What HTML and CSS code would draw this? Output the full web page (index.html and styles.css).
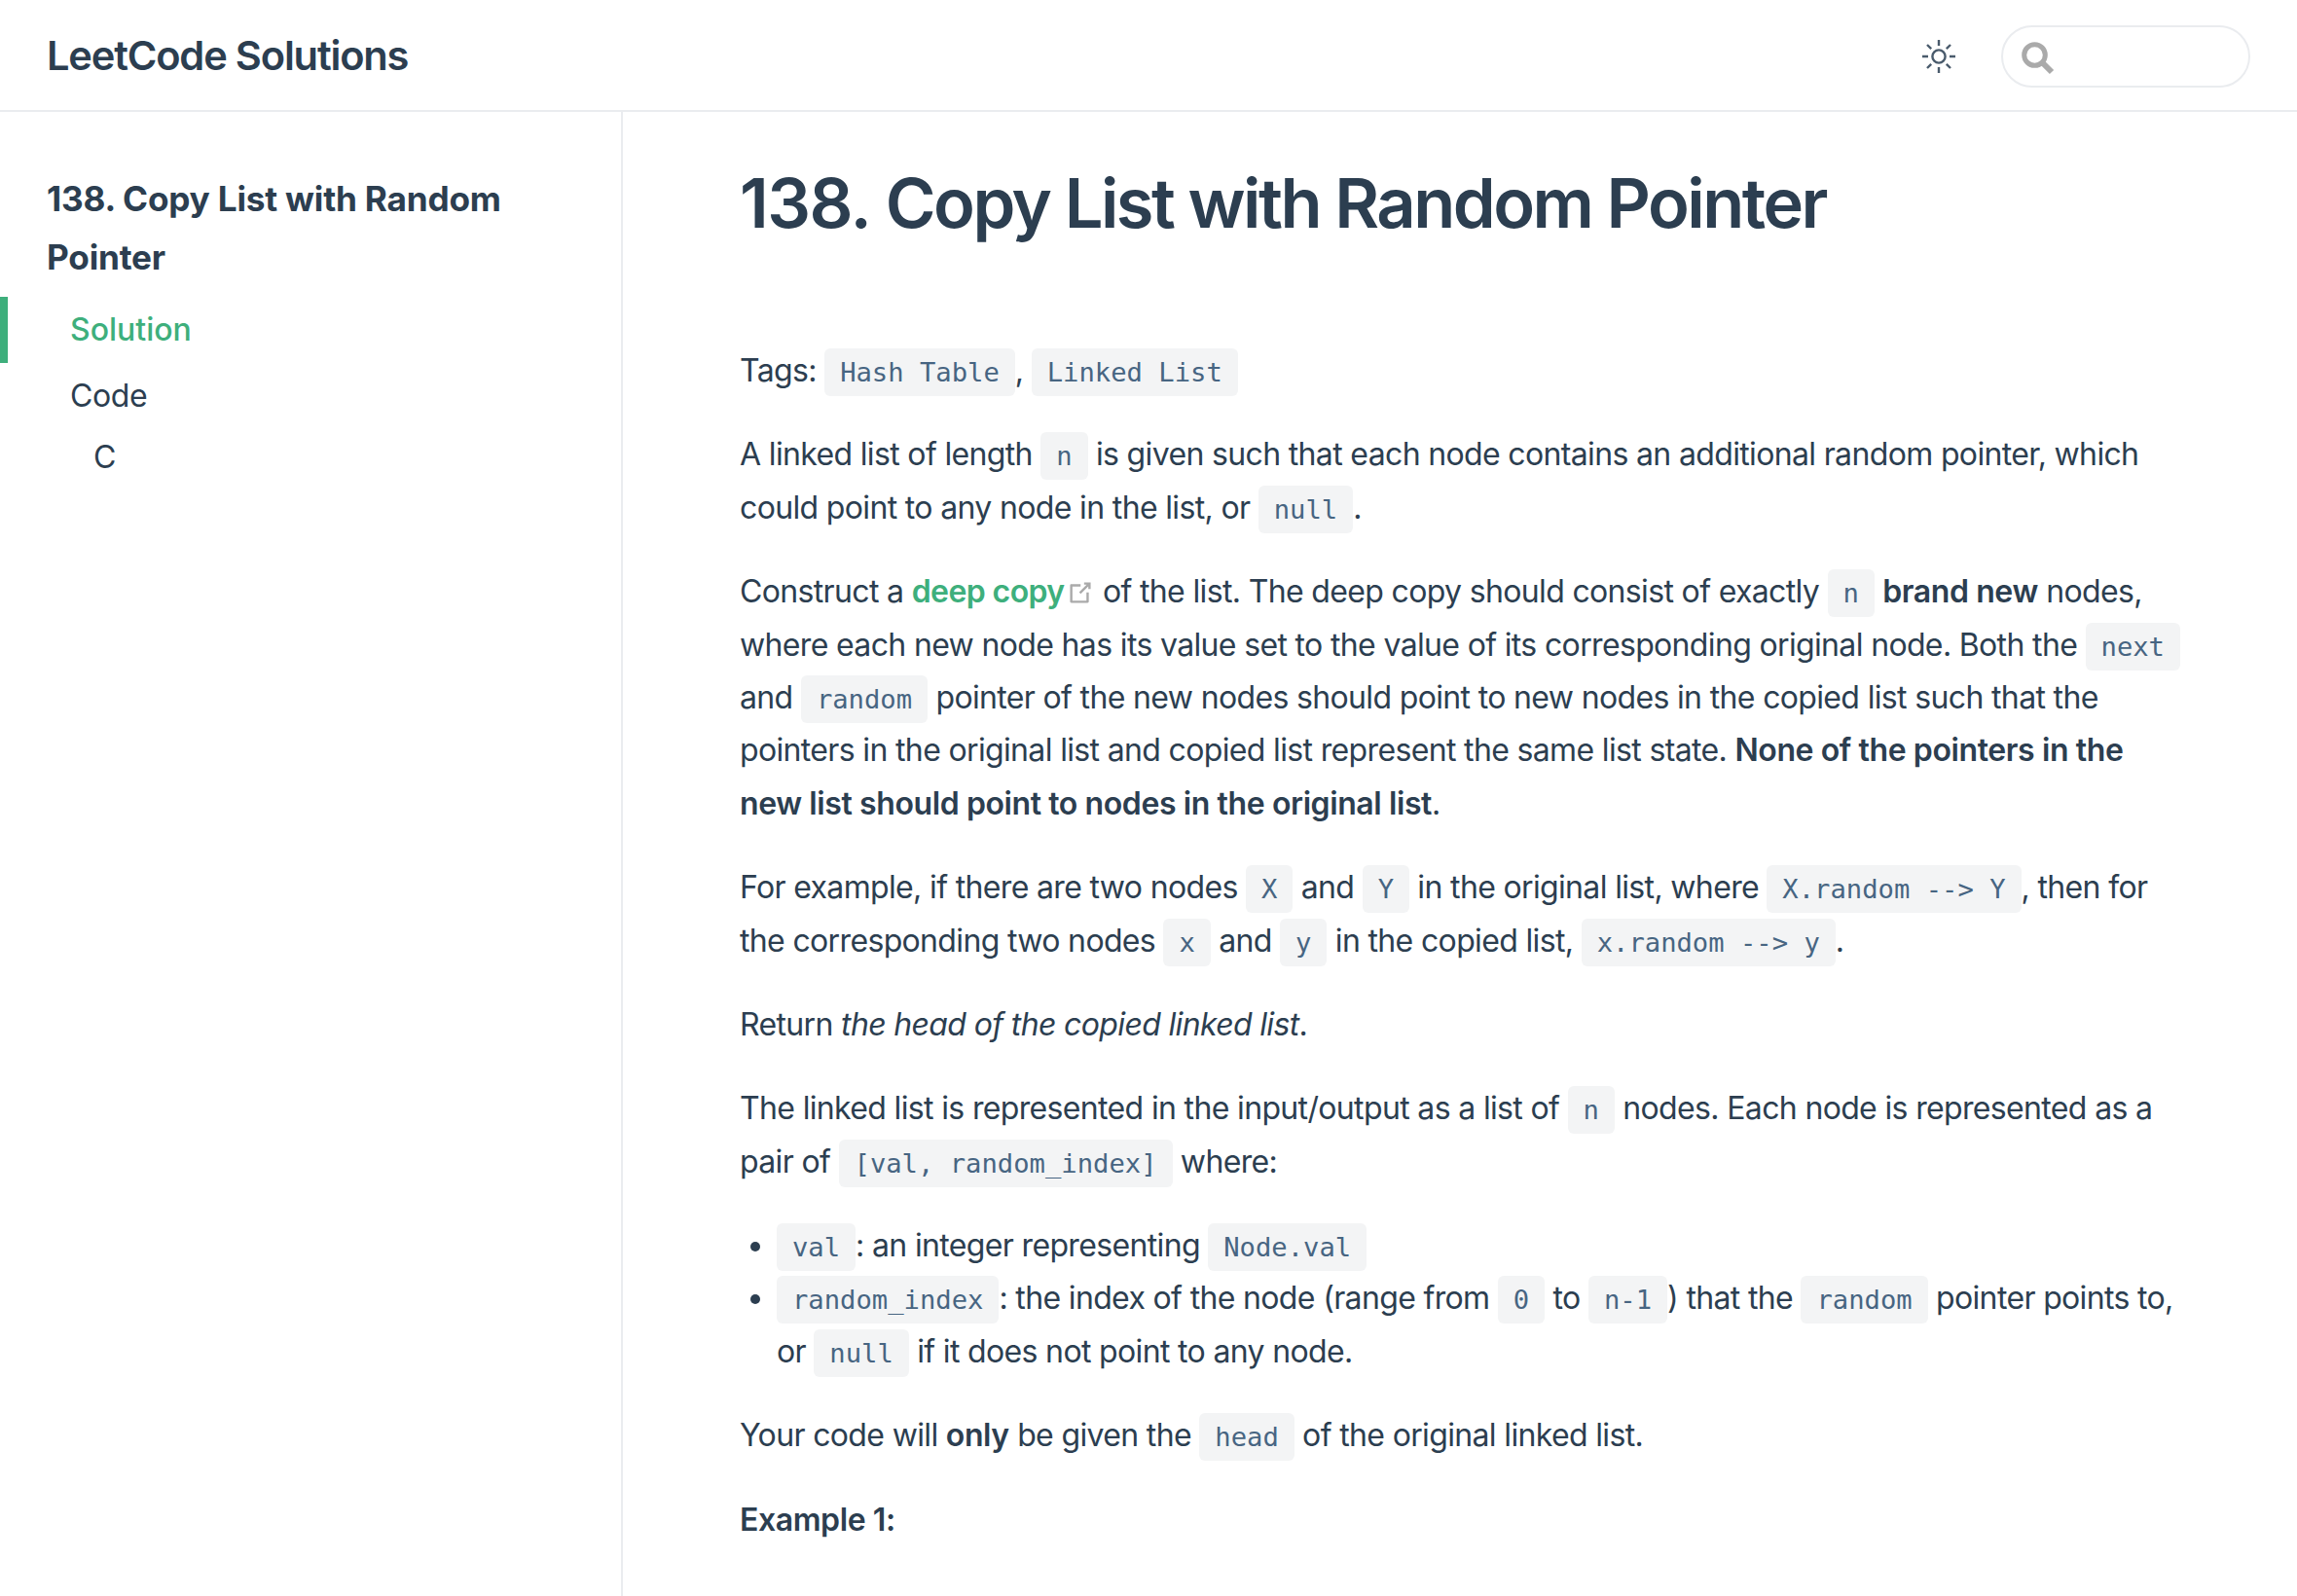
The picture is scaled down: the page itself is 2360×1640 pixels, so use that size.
FILE: index.html

```html
<!DOCTYPE html>
<html lang="en">
<head>
  <meta charset="UTF-8">
  <title>138. Copy List with Random Pointer | LeetCode Solutions</title>
  <link rel="stylesheet" href="styles.css">
</head>
<body>
  <header class="navbar">
    <a class="site-name" href="#">LeetCode Solutions</a>
    <div class="nav-tools">
      <button class="theme-toggle" aria-label="Toggle theme">
        <svg width="36" height="36" viewBox="0 0 36 36" fill="none" stroke="#4a5b6c" stroke-width="2.4">
          <circle cx="18" cy="18" r="6.6"/>
          <path d="M18 1v6M18 29v6M1 18h6M29 18h6M6 6l4.200 4.200M25.800 25.800l4.200 4.200M6 30l4.200-4.200M25.800 10.200l4.200-4.200"/>
        </svg>
      </button>
      <div class="search-box">
        <svg width="34" height="34" viewBox="0 0 34 34" fill="none" stroke="#aaa">
          <circle cx="13.500" cy="13.500" r="10.800" stroke-width="5"/>
          <path d="M21 21l10 10" stroke-width="6"/>
        </svg>
        <input type="text" aria-label="Search">
      </div>
    </div>
  </header>

  <div class="layout">
    <aside class="sidebar">
      <a class="sidebar-title" href="#">138. Copy List with Random Pointer</a>
      <ul class="sidebar-links">
        <li><a class="sidebar-link active" href="#">Solution</a></li>
        <li><a class="sidebar-link" href="#">Code</a></li>
        <li><a class="sidebar-link sub" href="#">C</a></li>
      </ul>
    </aside>

    <main class="content">
      <h1><span class="num">138.</span> Copy List with Random Pointer</h1>

      <p>Tags: <code>Hash Table</code>, <code>Linked List</code></p>

      <p>A linked list of length <code>n</code> is given such that each node contains an additional random pointer, which could point to any node in the list, or <code>null</code>.</p>

      <p>Construct a <a class="ext-link" href="#">deep copy<svg class="ext-icon" width="30" height="30" viewBox="0 0 100 100" fill="#aaa"><path d="M18.800 85.100h56c2.200 0 4-1.800 4-4v-32h-8v28h-48v-48h28v-8h-32c-2.200 0-4 1.800-4 4v56C14.800 83.300 16.600 85.100 18.800 85.100z"/><polygon points="45.700,48.700 51.300,54.300 77.200,28.500 77.200,37.200 85.200,37.200 85.200,14.900 62.800,14.900 62.800,22.900 71.500,22.900"/></svg></a> of the list. The deep copy should consist of exactly <code>n</code> <strong>brand new</strong> nodes, where each new node has its value set to the value of its corresponding original node. Both the <code>next</code> and <code>random</code> pointer of the new nodes should point to new nodes in the copied list such that the pointers in the original list and copied list represent the same list state. <strong>None of the pointers in the new list should point to nodes in the original list</strong>.</p>

      <p>For example, if there are two nodes <code>X</code> and <code>Y</code> in the original list, where <code>X.random --&gt; Y</code>, then for the corresponding two nodes <code>x</code> and <code>y</code> in the copied list, <code>x.random --&gt; y</code>.</p>

      <p>Return <em>the head of the copied linked list</em>.</p>

      <p>The linked list is represented in the input/output as a list of <code>n</code> nodes. Each node is represented as a pair of <code>[val, random_index]</code> where:</p>

      <ul class="bullets">
        <li><code>val</code>: an integer representing <code>Node.val</code></li>
        <li><code>random_index</code>: the index of the node (range from <code>0</code> to <code>n-1</code>) that the <code>random</code> pointer points to, or <code>null</code> if it does not point to any node.</li>
      </ul>

      <p>Your code will <strong>only</strong> be given the <code>head</code> of the original linked list.</p>

      <p><strong>Example 1:</strong></p>
    </main>
  </div>
</body>
</html>
```

FILE: styles.css

```css
* {
  box-sizing: border-box;
}

html, body {
  margin: 0;
  height: 100%;
}

body {
  font-family: Inter, "Noto Sans", sans-serif;
  font-size: 32px;
  line-height: 1.7;
  color: #2c3e50;
  background: #fff;
  overflow: hidden;
}

a {
  text-decoration: none;
  color: inherit;
}

.navbar {
  height: 115px;
  padding: 2px 48px 0;
  display: flex;
  align-items: center;
  justify-content: space-between;
  border-bottom: 2px solid #eaecef;
}

.site-name {
  font-size: 41.6px;
  font-weight: 600;
  letter-spacing: -1.17px;
}

.nav-tools {
  display: flex;
  align-items: center;
  gap: 46px;
}

.theme-toggle {
  display: flex;
  padding: 0;
  background: none;
  border: none;
}

.search-box {
  width: 256px;
  height: 64px;
  padding-left: 19px;
  display: flex;
  align-items: center;
  gap: 6px;
  border: 2px solid #eaecef;
  border-radius: 32px;
}

.search-box svg {
  margin-top: 4px;
}

.search-box input {
  flex: 1;
  width: 100%;
  border: none;
  outline: none;
  background: none;
}

.layout {
  display: flex;
  height: calc(100% - 115px);
}

.sidebar {
  flex: 0 0 640px;
  padding-top: 60px;
  border-right: 2px solid #eaecef;
}

.sidebar-title {
  display: block;
  padding: 0 48px;
  font-size: 35.2px;
  font-weight: 700;
  letter-spacing: -0.2px;
}

.sidebar-links {
  list-style: none;
  margin: 10px 0 0;
  padding: 0;
}

.sidebar-link {
  display: block;
  padding: 7px 32px 7px 64px;
  border-left: 8px solid transparent;
  letter-spacing: -0.4px;
}

.sidebar-link.active {
  color: #3eaf7c;
  font-weight: 500;
  border-left-color: #3eaf7c;
  letter-spacing: 0;
}

.sidebar-link.sub {
  padding: 2px 32px 0 88px;
}

.content {
  flex: 1;
  min-width: 0;
  padding: 0 114px 0 120px;
  letter-spacing: -0.65px;
}

h1 {
  margin: 50px 0 101px;
  font-size: 70.4px;
  font-weight: 600;
  line-height: 1.25;
  letter-spacing: -2.52px;
}

h1 .num {
  letter-spacing: -1.5px;
}

p {
  margin: 0 0 32px;
}

code {
  font-family: "DejaVu Sans Mono", monospace;
  font-size: 27.2px;
  padding: 9px 16px;
  color: #476582;
  background: #f3f4f5;
  border-radius: 6px;
  letter-spacing: 0;
}

strong {
  font-weight: 600;
  letter-spacing: -0.4px;
}

.ext-link {
  color: #3eaf7c;
  font-weight: 600;
  letter-spacing: -0.59px;
}

.ext-icon {
  margin-left: 1px;
  vertical-align: -5px;
}

.bullets {
  margin: 0 0 32px;
  padding-left: 38px;
}
```
